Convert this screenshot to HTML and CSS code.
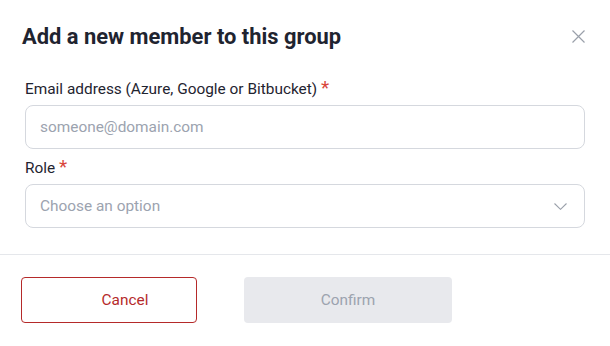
FILE: index.html
```html
<!DOCTYPE html>
<html>
<head>
<meta charset="utf-8">
<link rel="stylesheet" href="styles.css">
</head>
<body>
<div class="modal">
  <div class="header">
    <h2 class="title">Add a new member to this group</h2>
    <button class="close" aria-label="Close">
      <svg width="13" height="13" viewBox="0 0 13 13"><path d="M0.5 0.5 L12.5 12.5 M12.5 0.5 L0.5 12.5" stroke="#9aa0aa" stroke-width="1.2" fill="none"/></svg>
    </button>
  </div>
  <div class="body">
    <label class="label">Email address (Azure, Google or Bitbucket) <span class="req">*</span></label>
    <div class="field"><span class="placeholder">someone@domain.com</span></div>
    <label class="label label-role">Role <span class="req">*</span></label>
    <div class="field select">
      <span class="placeholder">Choose an option</span>
      <svg width="13" height="7" viewBox="0 0 13 7"><path d="M0.5 0.5 L6.5 6.3 L12.5 0.5" stroke="#9aa0aa" stroke-width="1.1" fill="none"/></svg>
    </div>
  </div>
  <div class="footer">
    <button class="btn btn-cancel">Cancel</button>
    <button class="btn btn-confirm">Confirm</button>
  </div>
</div>
</body>
</html>
```
FILE: styles.css
```css
html, body {
  margin: 0;
  padding: 0;
  background: #ffffff;
}
body {
  font-family: Roboto, "Liberation Sans", sans-serif;
  color: #1f2430;
}
.modal {
  width: 610px;
  height: 346px;
  box-sizing: border-box;
  display: flex;
  flex-direction: column;
}
.header {
  display: flex;
  justify-content: space-between;
  align-items: center;
  padding: 23px 25px 0 22px;
}
.title {
  margin: 0;
  font-size: 21.9px;
  line-height: 28px;
  font-weight: 700;
  color: #1f2430;
}
.close {
  border: 0;
  background: none;
  padding: 0;
  width: 13px;
  height: 13px;
  display: flex;
  margin-top: -1px;
}
.body {
  padding: 28px 25px 26px 25px;
  display: flex;
  flex-direction: column;
  border-bottom: 1px solid #e5e7eb;
}
.label {
  font-size: 15.4px;
  line-height: 20px;
  color: #1f2430;
  margin-bottom: 6px;
}
.label-role {
  margin-top: 9px;
}
.req {
  color: #d9463b;
  font-size: 19px;
  line-height: 10px;
}
.field {
  height: 44px;
  box-sizing: border-box;
  border: 1px solid #d5d8de;
  border-radius: 8px;
  display: flex;
  align-items: center;
  padding: 0 17px 0 14px;
}
.select {
  justify-content: space-between;
}
.placeholder {
  font-size: 15.4px;
  color: #9ca3af;
}
.footer {
  display: flex;
  gap: 47px;
  padding: 22px 21px 0 21px;
}
.btn {
  height: 46px;
  box-sizing: border-box;
  border-radius: 4px;
  font-family: Roboto, "Liberation Sans", sans-serif;
  font-size: 15.4px;
}
.btn-cancel {
  width: 176px;
  background: #ffffff;
  border: 1px solid #b52a2a;
  color: #b52a2a;
  padding: 0 0 0 32px;
}
.btn-confirm {
  width: 208px;
  background: #e8e9ed;
  border: 0;
  color: #9ca3af;
}
```
